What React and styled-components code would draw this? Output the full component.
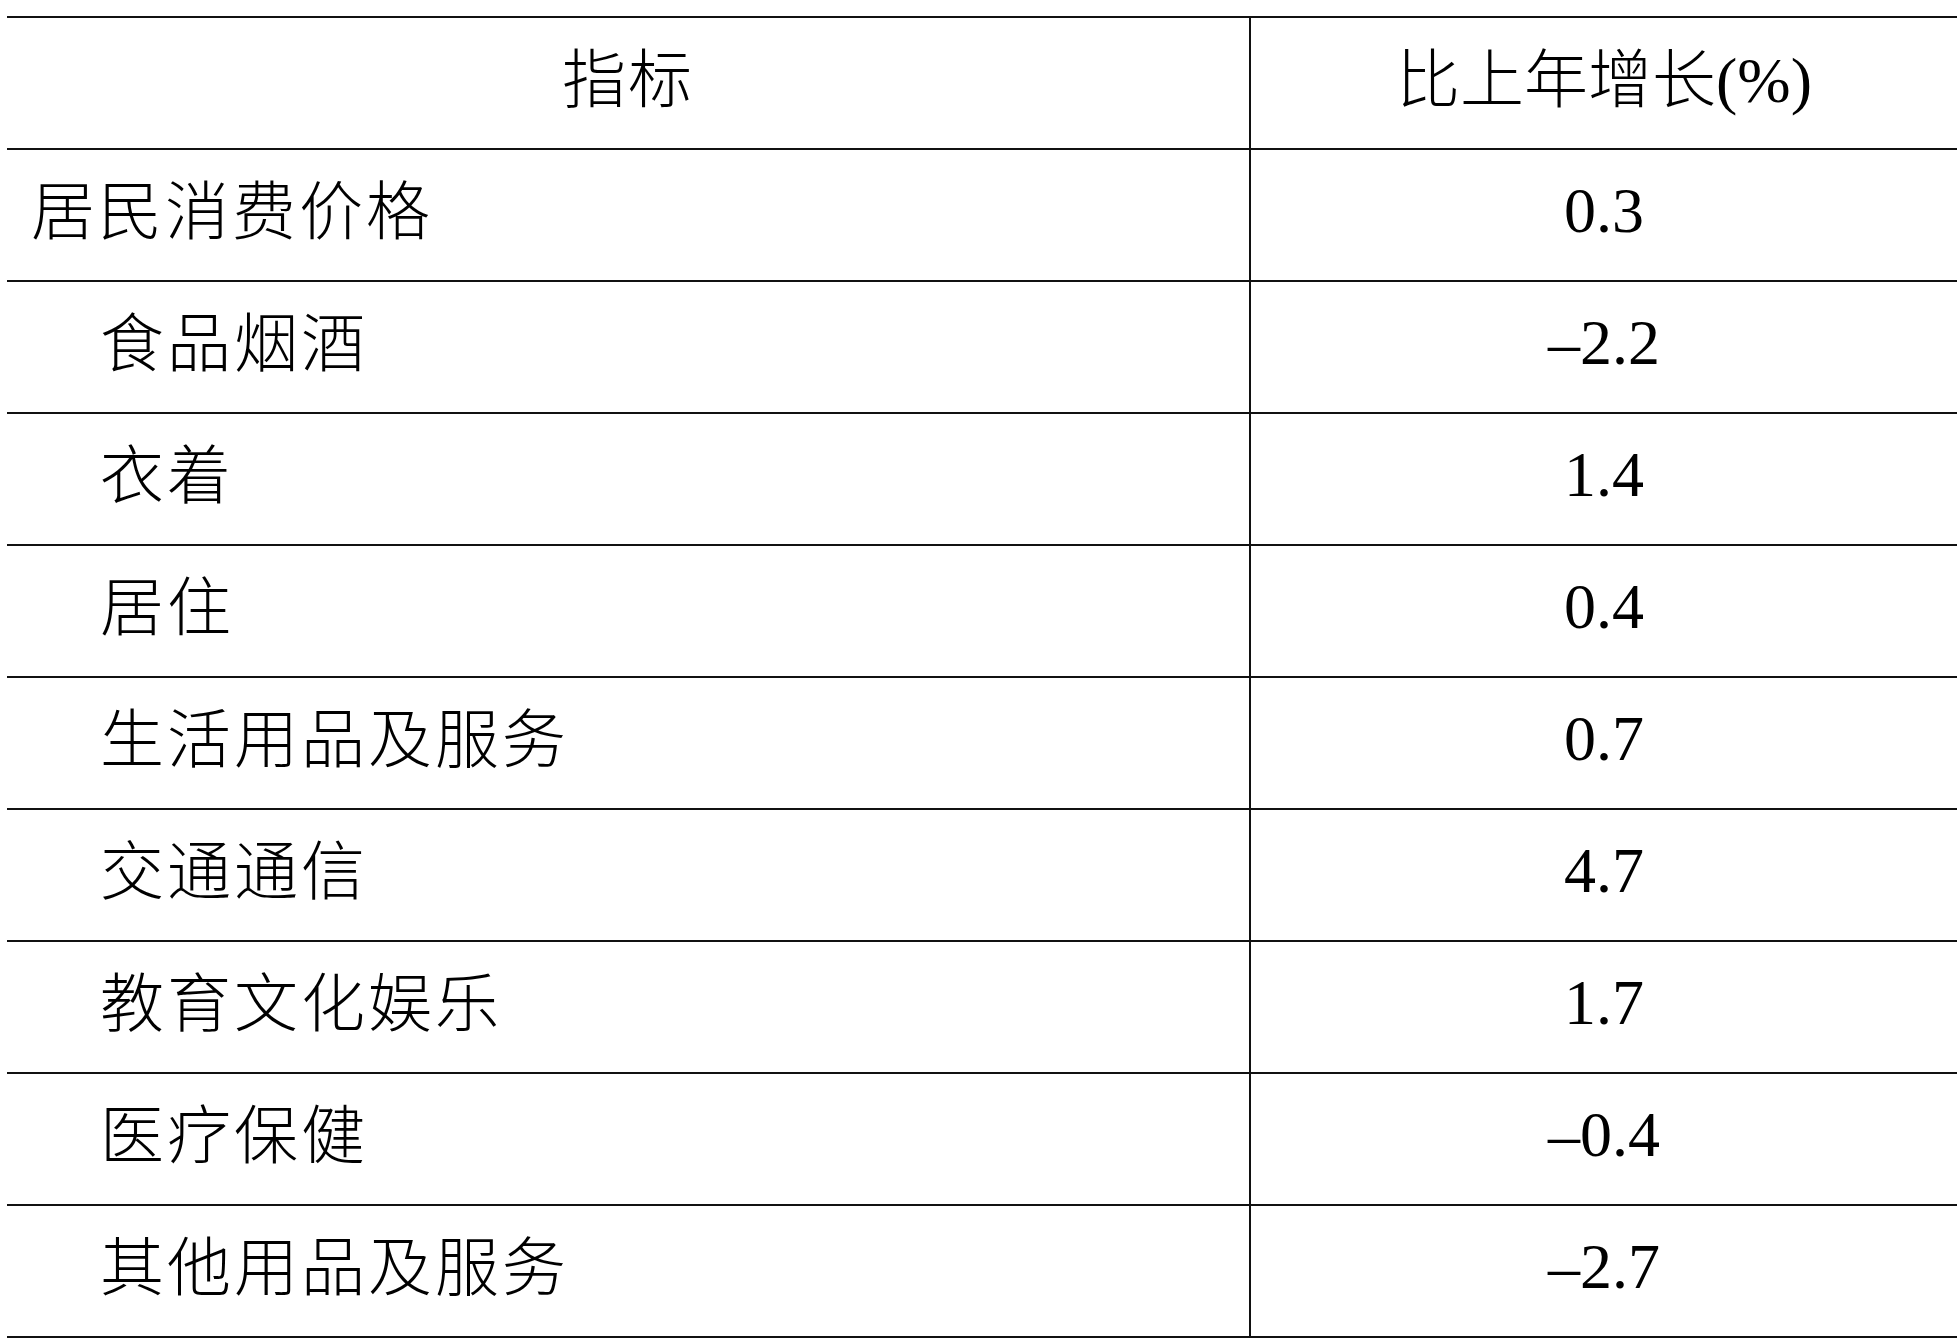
import styled, { createGlobalStyle } from 'styled-components'

const GlobalStyle = createGlobalStyle`
  html, body {
    margin: 0;
    padding: 0;
    background-color: #FFFFFF;
  }
`

const PageWrapper = styled.div`
  padding: 16px 0 0 7px;
`

const StatTable = styled.table`
  width: 1950px;
  border-collapse: separate;
  border-spacing: 0;
  border-top: 2px solid #111111;
  table-layout: fixed;
  font-family: "Liberation Serif", "Noto Sans CJK SC", serif;
  font-size: 64px;
  color: #000000;
`

/* 行高固定 132px（含 2px 底線），$lift 用來把文字往上推一點 */
const Cell = styled.td`
  height: ${props => 130 - (props.$lift || 0)}px;
  padding: 0 0 ${props => props.$lift || 0}px ${props => props.$indent || 0}px;
  border-bottom: 2px solid #111111;
  text-align: ${props => props.$align || 'center'};
  vertical-align: middle;
  line-height: 1;
  font-weight: 300;
  letter-spacing: ${props => props.$spacing || 0}px;
  white-space: nowrap;
`

const NameCell = styled(Cell)`
  width: 1242px;
  border-right: 2px solid #111111;
`

const rows = [
  { name: '居民消费价格', value: '0.3', level: 0 },
  { name: '食品烟酒', value: '–2.2', level: 1 },
  { name: '衣着', value: '1.4', level: 1 },
  { name: '居住', value: '0.4', level: 1 },
  { name: '生活用品及服务', value: '0.7', level: 1 },
  { name: '交通通信', value: '4.7', level: 1 },
  { name: '教育文化娱乐', value: '1.7', level: 1 },
  { name: '医疗保健', value: '–0.4', level: 1 },
  { name: '其他用品及服务', value: '–2.7', level: 1 },
]

function App() {
  return (
    <>
      <GlobalStyle />
      <PageWrapper>
        <StatTable>
          <thead>
            <tr>
              <NameCell as="th" $spacing={2} $lift={4}>指标</NameCell>
              <Cell as="th" $lift={4}>比上年增长(%)</Cell>
            </tr>
          </thead>
          <tbody>
            {/* 第一层指标靠左，子项目多缩排一个字 */}
            {rows.map(row =>
              <tr key={row.name}>
                <NameCell $align="left" $indent={row.level ? 93 : 24} $spacing={3} $lift={4}>
                  {row.name}
                </NameCell>
                <Cell $lift={8}>{row.value}</Cell>
              </tr>
            )}
          </tbody>
        </StatTable>
      </PageWrapper>
    </>
  )
}

export default App
